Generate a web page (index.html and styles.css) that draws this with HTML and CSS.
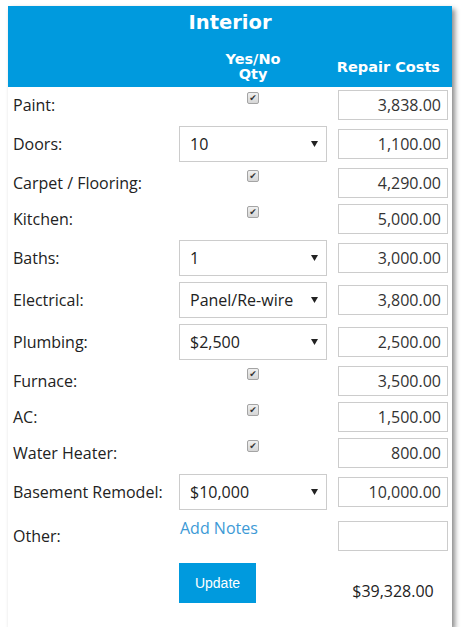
FILE: index.html
```html
<!DOCTYPE html>
<html lang="en">
<head>
<meta charset="utf-8">
<title>Interior</title>
<link rel="stylesheet" href="styles.css">
</head>
<body>
<div class="card">
  <div class="head">
    <h1 class="title">Interior</h1>
    <div class="cols">
      <span></span>
      <span class="h-qty">Yes/No<br>Qty</span>
      <span class="h-cost">Repair Costs</span>
    </div>
  </div>

  <div class="row">
    <span class="label">Paint:</span>
    <span class="cb">✔</span>
    <input class="cost" type="text" value="3,838.00" readonly>
  </div>
  <div class="row row-select">
    <span class="label">Doors:</span>
    <div class="select"><span>10</span><svg class="arrow" width="7" height="6" viewBox="0 0 7 6"><path d="M0 0H7L3.5 6Z" fill="#222"/></svg></div>
    <input class="cost" type="text" value="1,100.00" readonly>
  </div>
  <div class="row">
    <span class="label">Carpet / Flooring:</span>
    <span class="cb">✔</span>
    <input class="cost" type="text" value="4,290.00" readonly>
  </div>
  <div class="row">
    <span class="label">Kitchen:</span>
    <span class="cb">✔</span>
    <input class="cost" type="text" value="5,000.00" readonly>
  </div>
  <div class="row row-select">
    <span class="label">Baths:</span>
    <div class="select"><span>1</span><svg class="arrow" width="7" height="6" viewBox="0 0 7 6"><path d="M0 0H7L3.5 6Z" fill="#222"/></svg></div>
    <input class="cost" type="text" value="3,000.00" readonly>
  </div>
  <div class="row row-select">
    <span class="label">Electrical:</span>
    <div class="select"><span>Panel/Re-wire</span><svg class="arrow" width="7" height="6" viewBox="0 0 7 6"><path d="M0 0H7L3.5 6Z" fill="#222"/></svg></div>
    <input class="cost" type="text" value="3,800.00" readonly>
  </div>
  <div class="row row-select">
    <span class="label">Plumbing:</span>
    <div class="select"><span>$2,500</span><svg class="arrow" width="7" height="6" viewBox="0 0 7 6"><path d="M0 0H7L3.5 6Z" fill="#222"/></svg></div>
    <input class="cost" type="text" value="2,500.00" readonly>
  </div>
  <div class="row">
    <span class="label">Furnace:</span>
    <span class="cb">✔</span>
    <input class="cost" type="text" value="3,500.00" readonly>
  </div>
  <div class="row">
    <span class="label">AC:</span>
    <span class="cb">✔</span>
    <input class="cost" type="text" value="1,500.00" readonly>
  </div>
  <div class="row">
    <span class="label">Water Heater:</span>
    <span class="cb">✔</span>
    <input class="cost" type="text" value="800.00" readonly>
  </div>
  <div class="row row-select">
    <span class="label">Basement Remodel:</span>
    <div class="select"><span>$10,000</span><svg class="arrow" width="7" height="6" viewBox="0 0 7 6"><path d="M0 0H7L3.5 6Z" fill="#222"/></svg></div>
    <input class="cost" type="text" value="10,000.00" readonly>
  </div>
  <div class="row row-other">
    <span class="label">Other:</span>
    <a class="notes" href="#">Add Notes</a>
    <input class="cost" type="text" value="" readonly>
  </div>
  <div class="row row-foot">
    <span></span>
    <button class="btn" type="button">Update</button>
    <span class="total">$39,328.00</span>
  </div>
</div>
</body>
</html>
```
FILE: styles.css
```css
html, body {
  margin: 0;
  padding: 0;
  background: #fff;
}
body {
  padding: 6px 0 0 8px;
  font-family: "Open Sans", "DejaVu Sans", sans-serif;
  font-size: 16px;
  color: #222;
}
.card {
  width: 444px;
  background: #fff;
  box-shadow: 3px 3px 5px rgba(0, 0, 0, 0.45);
}
.head {
  background: #009ade;
  color: #fff;
  height: 81px;
  box-sizing: border-box;
  padding-top: 5px;
  font-family: "DejaVu Sans", sans-serif;
  font-weight: bold;
}
.title {
  margin: 0;
  font-size: 19.5px;
  line-height: 24px;
  text-align: center;
  font-weight: bold;
}
.cols {
  margin-top: 17px;
  display: grid;
  grid-template-columns: 166px 148px 121px;
  padding-left: 5px;
  align-items: center;
  font-size: 14.5px;
  line-height: 15px;
  height: 30px;
}
.h-qty {
  text-align: center;
}
.h-cost {
  text-align: right;
  padding-right: 8px;
  white-space: nowrap;
}
.row {
  display: grid;
  grid-template-columns: 166px 148px 121px;
  padding-left: 5px;
  align-items: center;
  height: 36px;
}
.row-select {
  height: 42px;
}
.row-other {
  height: 46px;
}
.row-foot {
  height: 68px;
  align-items: start;
}
.label {
  line-height: 22px;
}
.cb {
  justify-self: center;
  align-self: start;
  margin-top: 5px;
  width: 12px;
  height: 12px;
  box-sizing: border-box;
  border: 1px solid #a4a4a4;
  border-radius: 2px;
  background: linear-gradient(#f0f0f0, #d6d6d6);
  color: #333;
  font-family: "DejaVu Sans", sans-serif;
  font-size: 9px;
  line-height: 10px;
  text-align: center;
}
.select {
  height: 36px;
  box-sizing: border-box;
  border: 1px solid #ccc;
  padding: 0 8px 0 10px;
  display: flex;
  align-items: center;
  justify-content: space-between;
  color: #222;
}
.cost {
  justify-self: end;
  width: 110px;
  height: 30px;
  box-sizing: border-box;
  border: 1px solid #ccc;
  margin: 0;
  padding: 0 6px;
  font-family: "Open Sans", sans-serif;
  font-size: 16px;
  color: #333;
  text-align: right;
  background: #fff;
  outline: none;
}
.notes {
  align-self: start;
  margin-top: 4px;
  padding-left: 1px;
  line-height: 22px;
  color: #3d9ad6;
  text-decoration: none;
}
.btn {
  justify-self: start;
  margin-top: 4px;
  width: 77px;
  height: 40px;
  border: 0;
  background: #009ade;
  color: #fff;
  font-family: "Liberation Sans", Arial, sans-serif;
  font-size: 14px;
  padding: 0;
}
.total {
  justify-self: end;
  width: 110px;
  text-align: center;
  margin-top: 21px;
  line-height: 22px;
  color: #222;
}
```
